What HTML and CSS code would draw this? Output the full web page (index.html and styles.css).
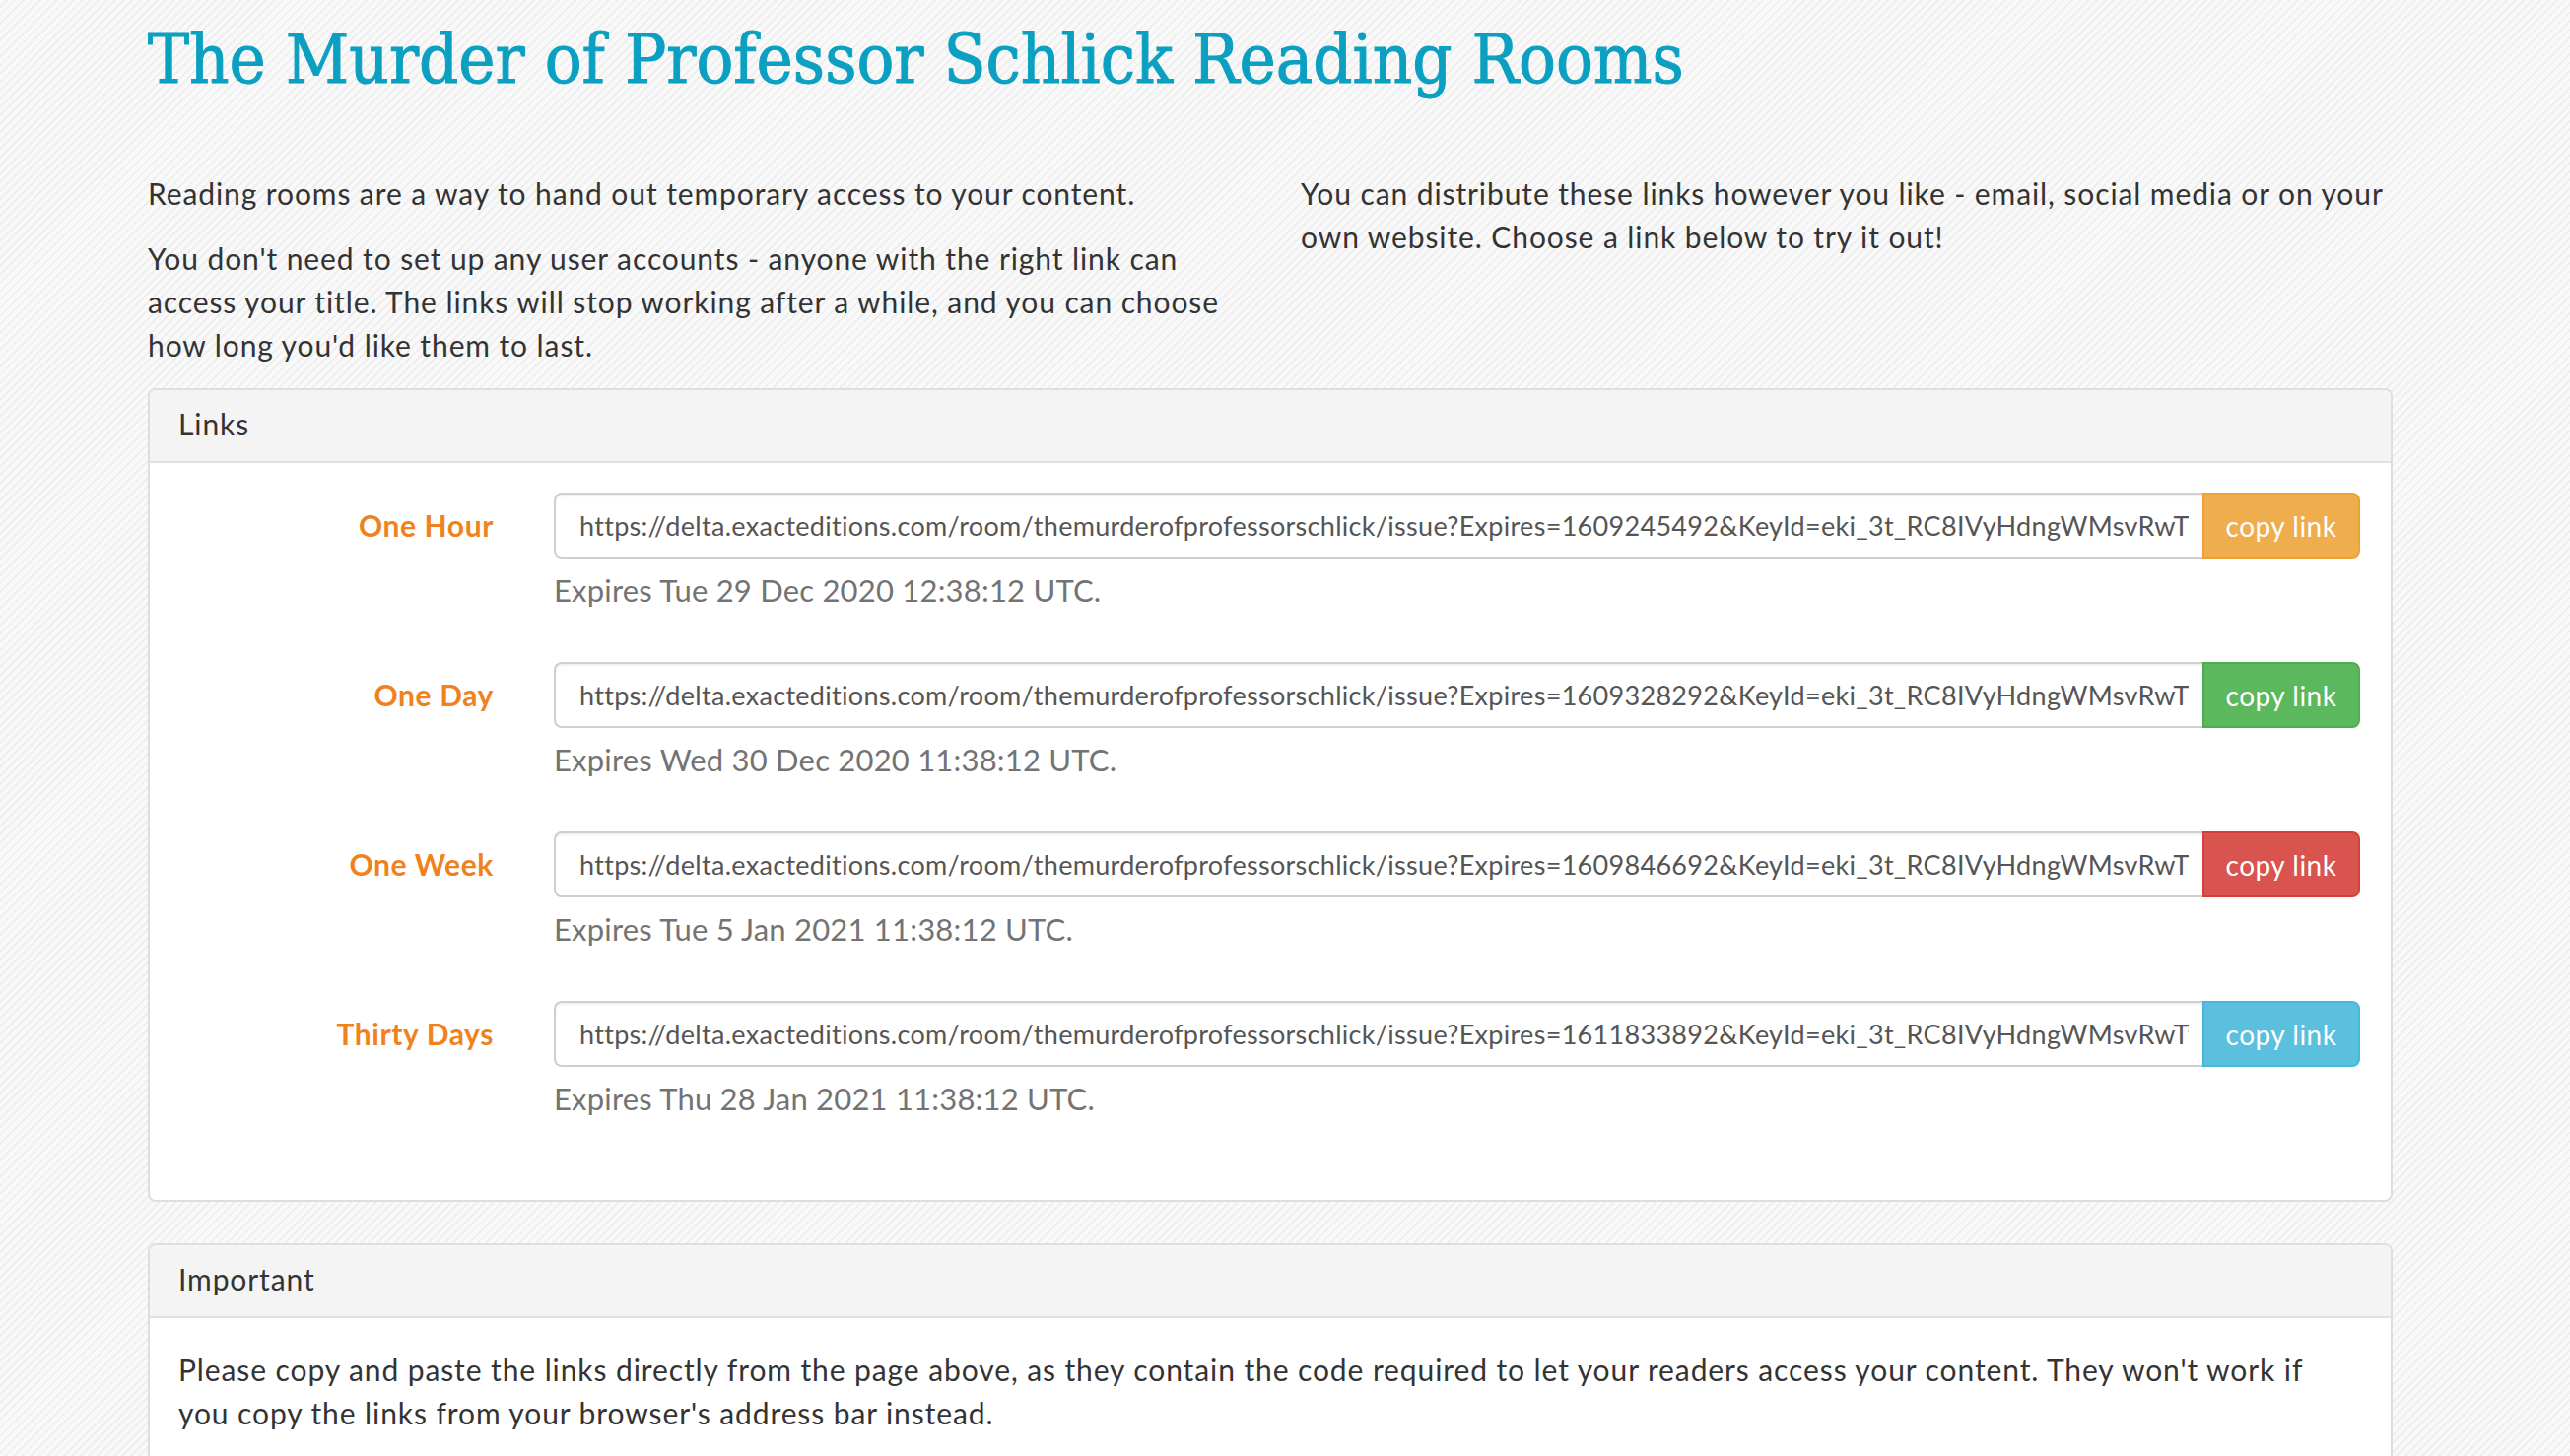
FILE: index.html
```html
<!DOCTYPE html>
<html lang="en">
<head>
    <meta charset="UTF-8">
    <title>The Murder of Professor Schlick Reading Rooms</title>
    <link rel="stylesheet" href="styles.css">
</head>
<body>
    <div class="container">
        <h1 class="page-title">The Murder of Professor Schlick Reading Rooms</h1>

        <div class="intro">
            <div class="intro-col">
                <p>Reading rooms are a way to hand out temporary access to your content.</p>
                <p>You don't need to set up any user accounts - anyone with the right link can access your title. The links will stop working after a while, and you can choose how long you'd like them to last.</p>
            </div>
            <div class="intro-col">
                <p>You can distribute these links however you like - email, social media or on your own website. Choose a link below to try it out!</p>
            </div>
        </div>

        <div class="panel">
            <div class="panel-heading">Links</div>
            <div class="panel-body links">
                <div class="link-row">
                    <label class="link-label">One Hour</label>
                    <div class="link-field">
                        <div class="input-group">
                            <input class="link-input" type="text" readonly value="https://delta.exacteditions.com/room/themurderofprofessorschlick/issue?Expires=1609245492&amp;KeyId=eki_3t_RC8IVyHdngWMsvRwT&amp;Signature=Zk3v9Qp1bL7">
                            <button class="copy-btn warning">copy link</button>
                        </div>
                        <p class="expires">Expires Tue 29 Dec 2020 12:38:12 UTC.</p>
                    </div>
                </div>
                <div class="link-row">
                    <label class="link-label">One Day</label>
                    <div class="link-field">
                        <div class="input-group">
                            <input class="link-input" type="text" readonly value="https://delta.exacteditions.com/room/themurderofprofessorschlick/issue?Expires=1609328292&amp;KeyId=eki_3t_RC8IVyHdngWMsvRwT&amp;Signature=Hq2m8Xr4tN0">
                            <button class="copy-btn success">copy link</button>
                        </div>
                        <p class="expires">Expires Wed 30 Dec 2020 11:38:12 UTC.</p>
                    </div>
                </div>
                <div class="link-row">
                    <label class="link-label">One Week</label>
                    <div class="link-field">
                        <div class="input-group">
                            <input class="link-input" type="text" readonly value="https://delta.exacteditions.com/room/themurderofprofessorschlick/issue?Expires=1609846692&amp;KeyId=eki_3t_RC8IVyHdngWMsvRwT&amp;Signature=Pw5c1Ld7yK2">
                            <button class="copy-btn danger">copy link</button>
                        </div>
                        <p class="expires">Expires Tue 5 Jan 2021 11:38:12 UTC.</p>
                    </div>
                </div>
                <div class="link-row">
                    <label class="link-label">Thirty Days</label>
                    <div class="link-field">
                        <div class="input-group">
                            <input class="link-input" type="text" readonly value="https://delta.exacteditions.com/room/themurderofprofessorschlick/issue?Expires=1611833892&amp;KeyId=eki_3t_RC8IVyHdngWMsvRwTtg&amp;Signature=Rb6s0Vn3jM8">
                            <button class="copy-btn info">copy link</button>
                        </div>
                        <p class="expires">Expires Thu 28 Jan 2021 11:38:12 UTC.</p>
                    </div>
                </div>
            </div>
        </div>

        <div class="panel">
            <div class="panel-heading">Important</div>
            <div class="panel-body notice">
                <p>Please copy and paste the links directly from the page above, as they contain the code required to let your readers access your content. They won't work if you copy the links from your browser's address bar instead.</p>
            </div>
        </div>
    </div>
</body>
</html>
```

FILE: styles.css
```css
* {
    box-sizing: border-box;
}
body {
    margin: 0;
    font-family: 'Lato', 'Open Sans', sans-serif;
    font-size: 30px;
    line-height: 44px;
    letter-spacing: 0.9px;
    color: #333;
    background-color: #f8f8f8;
    background-image: repeating-linear-gradient(135deg, #f9f9f9 0, #f9f9f9 4px, #efefef 4px, #efefef 6px);
}
p {
    margin: 0 0 22px;
}
.container {
    width: 2278px;
    margin-left: 150px;
}
.page-title {
    margin: 0;
    padding-top: 10px;
    height: 174px;
    font-family: 'DejaVu Serif Condensed', 'DejaVu Serif', serif;
    font-stretch: condensed;
    font-weight: normal;
    font-size: 70px;
    line-height: 100px;
    letter-spacing: 0;
    color: #0ba0c1;
    -webkit-text-stroke: 1px #0ba0c1;
}

/* Intro columns */
.intro {
    display: grid;
    grid-template-columns: 1108px 1108px;
    column-gap: 62px;
}

/* Panels */
.panel {
    background: #fff;
    border: 2px solid #dedede;
    border-radius: 8px;
    margin-bottom: 42px;
}
.panel-heading {
    background: #f4f4f4;
    border-bottom: 2px solid #e0e0e0;
    border-radius: 6px 6px 0 0;
    padding: 12px 29px 16px;
    color: #333;
}
.panel-body {
    padding: 30px 29px 8px;
}
.notice {
    padding-right: 48px;
}
.links {
    padding: 30px 31px 30px 0;
}

/* Link rows */
.link-row {
    display: flex;
    margin-bottom: 51px;
}
.link-label {
    width: 349px;
    flex-shrink: 0;
    text-align: right;
    font-weight: bold;
    letter-spacing: 0.6px;
    color: #f0821e;
    line-height: 67px;
}
.link-field {
    flex: 1;
    margin-left: 61px;
}
.input-group {
    display: flex;
    height: 67px;
}
.link-input {
    flex: 1;
    min-width: 0;
    height: 67px;
    padding: 0 14px 0 24px;
    border: 2px solid #cfcfcf;
    border-right: none;
    border-radius: 8px 0 0 8px;
    box-shadow: inset 0 2px 2px rgba(0, 0, 0, 0.06);
    font-family: 'Lato', 'Open Sans', sans-serif;
    font-size: 27px;
    letter-spacing: 0.3px;
    color: #555;
    background: #fff;
}
.copy-btn {
    width: 160px;
    flex-shrink: 0;
    border: 2px solid transparent;
    border-radius: 0 8px 8px 0;
    font-family: 'Lato', 'Open Sans', sans-serif;
    font-size: 28px;
    letter-spacing: 0.5px;
    color: #fff;
    cursor: pointer;
}
.copy-btn.warning {
    background: #efad4e;
    border-color: #eea236;
}
.copy-btn.success {
    background: #5cb85c;
    border-color: #4cae4c;
}
.copy-btn.danger {
    background: #d9534f;
    border-color: #d43f3a;
}
.copy-btn.info {
    background: #5bc0de;
    border-color: #46b8da;
}
.expires {
    margin: 10px 0 0;
    font-size: 31px;
    letter-spacing: 0.2px;
    color: #737373;
}
```
